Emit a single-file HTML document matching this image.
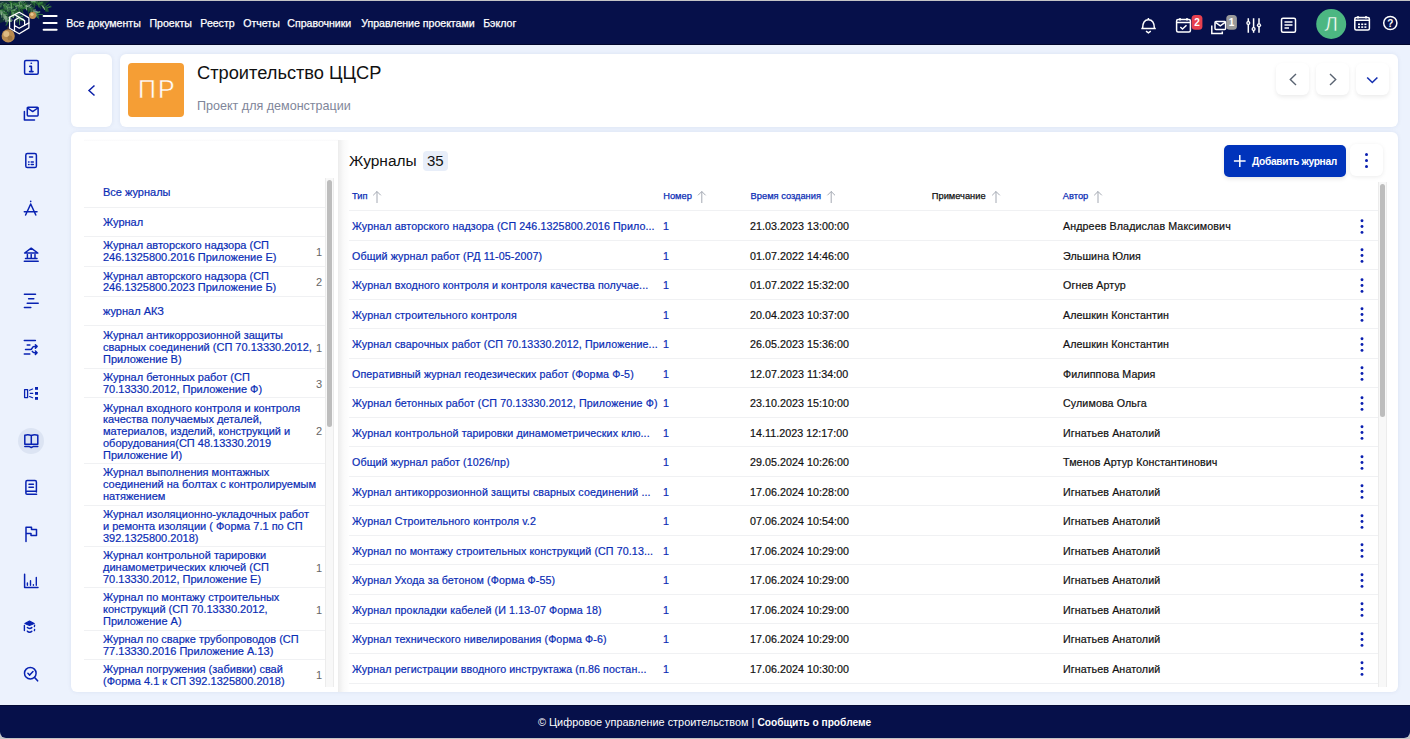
<!DOCTYPE html>
<html><head><meta charset="utf-8">
<style>
*{box-sizing:border-box;margin:0;padding:0}
html,body{width:1410px;height:739px;overflow:hidden;background:#c4c4c6;font-family:"Liberation Sans",sans-serif}
.abs{position:absolute}
.app{position:absolute;left:0;top:1px;width:1410px;height:737px;background:#ecf2fd;border-radius:0 0 6px 6px;overflow:hidden}
.hdr{position:absolute;left:0;top:1px;width:1410px;height:44px;background:#06104a;border-bottom:1px solid #02072e}
.nav{position:absolute;top:17.9px;font-size:10.6px;line-height:10.6px;color:#fff;white-space:nowrap;letter-spacing:-0.02px;-webkit-text-stroke:0.25px #fff}
.ftr{position:absolute;left:0;top:705px;width:1410px;height:33px;background:#06104a;border-radius:0 0 6px 6px;border-top:1px solid #030a35}
.ftxt{position:absolute;top:717px;left:538px;font-size:10.9px;line-height:11px;color:#fff;white-space:nowrap}
.ftxt b{font-size:10.2px}
.side svg{position:absolute}
.card{position:absolute;background:#fff;border-radius:6px;box-shadow:0 0 4px rgba(20,45,110,0.08)}
.t{position:absolute;white-space:nowrap;line-height:1}
.tr{position:absolute;left:349px;width:1029px;height:29.5px;border-top:1px solid #f0f1f3}
.tr span{position:absolute;top:10.1px;font-size:10.7px;line-height:10.7px;white-space:nowrap;-webkit-text-stroke:0.2px currentColor}
.c1{letter-spacing:0.1px}
.c1{left:3px;color:#0a2db5}
.c2{left:314px;color:#0a2db5}
.c3{left:401px;color:#111;letter-spacing:0.05px}
.c5{left:714px;color:#111;letter-spacing:0.1px}
.kb{position:absolute;left:1011px;top:7.7px;width:4px;height:16px}
.kb b{position:absolute;left:0;width:2.9px;height:2.9px;border-radius:50%;background:#0a1fb0}
.kb b:nth-child(1){top:0}.kb b:nth-child(2){top:5.9px}.kb b:nth-child(3){top:11.8px}
.li{position:absolute;left:84px;width:241px;border-bottom:1px solid #f0f1f3}
.lt{position:absolute;left:19px;top:calc(50% + 1.3px);transform:translateY(-50%);font-size:11px;line-height:11.75px;color:#0a2db5;white-space:nowrap;-webkit-text-stroke:0.2px currentColor}
.lc{position:absolute;right:3px;top:calc(50% + 0.8px);transform:translateY(-50%);font-size:11px;line-height:11px;color:#666}
.th{position:absolute;top:192px;font-size:9.3px;line-height:9.3px;color:#0a2db5;white-space:nowrap;-webkit-text-stroke:0.25px currentColor}
.th svg{position:absolute;top:-3px}
</style></head><body>
<div class="app"></div>
<div class="hdr"></div>
<!-- logo -->
<svg class="abs" style="left:0;top:1px" width="62" height="44" viewBox="0 1 62 44" stroke-linecap="round">
  <path d="M0 1 L50 1 L46 4 L36 6 L28 8 L22 11 L17 14 L12 18 L6 21 L0 23 Z" fill="#1c4a2a" opacity="0.55"/>
  <g fill="none"><path d="M2.6 4.6 L5.2 4.0" stroke="#2a6a2f" stroke-width="0.71"/>
<path d="M2.9 4.8 L5.6 3.1" stroke="#1f5a25" stroke-width="0.67"/>
<path d="M0.6 3.3 L3.1 2.5" stroke="#86b58a" stroke-width="0.55"/>
<path d="M1.8 4.1 L5.3 2.9" stroke="#2d7a33" stroke-width="0.52"/>
<path d="M6.9 7.3 L7.8 11.3" stroke="#86b58a" stroke-width="0.62"/>
<path d="M6.5 7.1 L10.7 7.0" stroke="#2d7a33" stroke-width="0.65"/>
<path d="M4.4 5.7 L8.5 4.3" stroke="#5f9f62" stroke-width="0.77"/>
<path d="M3.4 5.1 L4.4 10.3" stroke="#3f8c45" stroke-width="0.62"/>
<path d="M6.4 7.0 L9.8 7.0" stroke="#5f9f62" stroke-width="0.85"/>
<path d="M5.8 6.6 L6.1 9.4" stroke="#86b58a" stroke-width="0.67"/>
<path d="M6.1 6.8 L9.2 4.7" stroke="#a8c8a6" stroke-width="0.53"/>
<path d="M4.5 5.8 L5.4 9.2" stroke="#5f9f62" stroke-width="0.73"/>
<path d="M3.6 5.3 L6.9 3.1" stroke="#a8c8a6" stroke-width="0.53"/>
<path d="M5.8 6.7 L6.2 12.1" stroke="#2a6a2f" stroke-width="0.68"/>
<path d="M5.7 6.6 L7.6 10.0" stroke="#2d7a33" stroke-width="0.74"/>
<path d="M3.9 5.5 L6.5 4.1" stroke="#2d7a33" stroke-width="0.66"/>
<path d="M7.3 7.6 L9.0 11.0" stroke="#86b58a" stroke-width="0.61"/>
<path d="M1.1 3.7 L0.8 7.0" stroke="#5f9f62" stroke-width="0.89"/>
<path d="M5.5 6.4 L5.0 9.3" stroke="#2d7a33" stroke-width="0.56"/>
<path d="M5.3 6.3 L9.4 5.1" stroke="#3f8c45" stroke-width="0.61"/>
<path d="M9.0 8.9 L8.8 12.3" stroke="#2d7a33" stroke-width="0.78"/>
<path d="M11.6 11.1 L16.7 10.5" stroke="#2a6a2f" stroke-width="0.77"/>
<path d="M11.9 11.4 L12.1 14.2" stroke="#a8c8a6" stroke-width="0.66"/>
<path d="M9.3 9.1 L12.1 8.9" stroke="#86b58a" stroke-width="0.52"/>
<path d="M8.0 8.0 L13.3 7.1" stroke="#86b58a" stroke-width="0.51"/>
<path d="M14.1 13.2 L15.0 16.4" stroke="#3f8c45" stroke-width="0.74"/>
<path d="M11.3 10.8 L16.4 8.8" stroke="#5f9f62" stroke-width="0.69"/>
<path d="M10.2 9.9 L13.7 10.4" stroke="#3f8c45" stroke-width="0.69"/>
<path d="M12.8 12.2 L18.2 12.5" stroke="#3f8c45" stroke-width="0.56"/>
<path d="M11.8 11.3 L15.0 10.2" stroke="#a8c8a6" stroke-width="0.85"/>
<path d="M12.9 12.2 L12.9 17.4" stroke="#3f8c45" stroke-width="0.81"/>
<path d="M11.7 11.2 L11.4 15.5" stroke="#2a6a2f" stroke-width="0.89"/>
<path d="M14.0 13.1 L18.4 11.4" stroke="#2d7a33" stroke-width="0.58"/>
<path d="M11.4 11.0 L15.8 8.7" stroke="#5f9f62" stroke-width="0.60"/>
<path d="M12.8 12.2 L13.1 17.5" stroke="#3f8c45" stroke-width="0.88"/>
<path d="M10.6 10.2 L14.4 10.7" stroke="#3f8c45" stroke-width="0.58"/>
<path d="M12.4 11.7 L16.8 11.2" stroke="#2a6a2f" stroke-width="0.76"/>
<path d="M13.8 13.0 L18.3 11.0" stroke="#2a6a2f" stroke-width="0.58"/>
<path d="M14.2 13.3 L13.6 16.8" stroke="#2a6a2f" stroke-width="0.88"/>
<path d="M13.1 12.3 L13.5 17.7" stroke="#a8c8a6" stroke-width="0.56"/>
<path d="M20.0 20.0 L25.0 21.4" stroke="#2a6a2f" stroke-width="0.76"/>
<path d="M18.1 17.7 L17.1 21.1" stroke="#86b58a" stroke-width="0.72"/>
<path d="M15.1 14.1 L20.4 14.2" stroke="#5f9f62" stroke-width="0.89"/>
<path d="M16.0 15.2 L18.9 16.3" stroke="#86b58a" stroke-width="0.60"/>
<path d="M17.9 17.5 L17.0 22.4" stroke="#1f5a25" stroke-width="0.86"/>
<path d="M16.8 16.1 L15.5 20.9" stroke="#86b58a" stroke-width="0.67"/>
<path d="M19.6 19.5 L23.7 19.5" stroke="#1f5a25" stroke-width="0.85"/>
<path d="M18.9 18.7 L21.8 18.2" stroke="#2d7a33" stroke-width="0.69"/>
<path d="M18.6 18.4 L22.6 18.9" stroke="#86b58a" stroke-width="0.69"/>
<path d="M18.9 18.7 L22.1 19.3" stroke="#2a6a2f" stroke-width="0.54"/>
<path d="M17.3 16.7 L22.4 15.9" stroke="#5f9f62" stroke-width="0.63"/>
<path d="M19.9 19.8 L23.7 19.4" stroke="#86b58a" stroke-width="0.82"/>
<path d="M17.5 17.0 L22.6 16.5" stroke="#3f8c45" stroke-width="0.87"/>
<path d="M19.5 19.4 L22.3 18.7" stroke="#1f5a25" stroke-width="0.66"/>
<path d="M16.6 15.9 L19.7 16.1" stroke="#3f8c45" stroke-width="0.81"/>
<path d="M19.5 19.4 L23.7 18.2" stroke="#3f8c45" stroke-width="0.56"/>
<path d="M19.4 19.3 L19.6 24.7" stroke="#5f9f62" stroke-width="0.85"/>
<path d="M0.8 10.8 L4.6 11.5" stroke="#86b58a" stroke-width="0.66"/>
<path d="M2.1 12.1 L2.4 16.8" stroke="#1f5a25" stroke-width="0.64"/>
<path d="M2.3 12.3 L6.3 12.4" stroke="#3f8c45" stroke-width="0.70"/>
<path d="M0.3 10.3 L2.9 9.2" stroke="#3f8c45" stroke-width="0.61"/>
<path d="M4.5 14.5 L7.4 14.8" stroke="#5f9f62" stroke-width="0.84"/>
<path d="M3.4 13.4 L3.4 17.5" stroke="#86b58a" stroke-width="0.73"/>
<path d="M3.5 13.5 L8.4 13.9" stroke="#2d7a33" stroke-width="0.67"/>
<path d="M0.4 10.4 L5.2 9.6" stroke="#1f5a25" stroke-width="0.74"/>
<path d="M1.1 11.1 L-0.1 14.8" stroke="#3f8c45" stroke-width="0.90"/>
<path d="M2.1 12.1 L1.7 14.7" stroke="#a8c8a6" stroke-width="0.60"/>
<path d="M0.5 10.5 L3.6 10.9" stroke="#3f8c45" stroke-width="0.75"/>
<path d="M2.7 12.7 L6.6 13.0" stroke="#2d7a33" stroke-width="0.61"/>
<path d="M4.0 14.0 L4.7 16.5" stroke="#86b58a" stroke-width="0.72"/>
<path d="M0.9 10.9 L1.4 14.8" stroke="#a8c8a6" stroke-width="0.83"/>
<path d="M2.2 12.2 L1.7 17.3" stroke="#86b58a" stroke-width="0.62"/>
<path d="M5.9 16.5 L10.6 18.0" stroke="#a8c8a6" stroke-width="0.79"/>
<path d="M5.6 16.0 L2.5 19.9" stroke="#1f5a25" stroke-width="0.53"/>
<path d="M8.0 20.2 L7.2 22.7" stroke="#a8c8a6" stroke-width="0.84"/>
<path d="M8.5 21.1 L6.7 25.3" stroke="#1f5a25" stroke-width="0.68"/>
<path d="M5.6 16.1 L5.7 19.7" stroke="#3f8c45" stroke-width="0.89"/>
<path d="M7.2 18.8 L11.6 21.4" stroke="#2d7a33" stroke-width="0.64"/>
<path d="M5.0 15.0 L4.9 18.3" stroke="#a8c8a6" stroke-width="0.58"/>
<path d="M7.0 18.5 L11.4 20.9" stroke="#2d7a33" stroke-width="0.66"/>
<path d="M5.2 15.3 L9.3 16.8" stroke="#1f5a25" stroke-width="0.73"/>
<path d="M7.1 18.7 L11.7 19.1" stroke="#86b58a" stroke-width="0.66"/>
<path d="M6.3 17.3 L5.9 21.9" stroke="#a8c8a6" stroke-width="0.56"/>
<path d="M8.3 20.8 L6.0 25.1" stroke="#2d7a33" stroke-width="0.86"/>
<path d="M8.0 20.3 L12.3 20.2" stroke="#a8c8a6" stroke-width="0.77"/>
<path d="M7.8 19.9 L10.1 21.1" stroke="#a8c8a6" stroke-width="0.64"/>
<path d="M5.4 15.7 L3.8 19.8" stroke="#a8c8a6" stroke-width="0.71"/>
<path d="M6.0 16.7 L6.1 21.6" stroke="#a8c8a6" stroke-width="0.87"/>
<path d="M8.6 21.3 L11.3 21.5" stroke="#a8c8a6" stroke-width="0.69"/>
<path d="M24.5 5.2 L26.5 9.5" stroke="#2d7a33" stroke-width="0.80"/>
<path d="M25.8 5.9 L25.8 8.6" stroke="#a8c8a6" stroke-width="0.61"/>
<path d="M18.4 2.2 L21.3 1.9" stroke="#3f8c45" stroke-width="0.76"/>
<path d="M23.5 4.8 L26.2 4.7" stroke="#3f8c45" stroke-width="0.89"/>
<path d="M18.8 2.4 L21.7 0.8" stroke="#86b58a" stroke-width="0.61"/>
<path d="M21.7 3.9 L24.8 1.1" stroke="#3f8c45" stroke-width="0.89"/>
<path d="M25.5 5.7 L28.1 5.1" stroke="#86b58a" stroke-width="0.89"/>
<path d="M21.6 3.8 L23.3 8.8" stroke="#2d7a33" stroke-width="0.53"/>
<path d="M18.7 2.4 L18.5 5.3" stroke="#2a6a2f" stroke-width="0.75"/>
<path d="M20.2 3.1 L23.0 1.5" stroke="#5f9f62" stroke-width="0.66"/>
<path d="M19.3 2.6 L19.8 6.3" stroke="#a8c8a6" stroke-width="0.56"/>
<path d="M20.8 3.4 L22.5 6.4" stroke="#3f8c45" stroke-width="0.80"/>
<path d="M24.7 5.4 L27.1 3.4" stroke="#1f5a25" stroke-width="0.86"/>
<path d="M20.3 3.2 L22.3 6.3" stroke="#2a6a2f" stroke-width="0.74"/>
<path d="M20.9 3.4 L21.3 8.5" stroke="#3f8c45" stroke-width="0.54"/>
<path d="M24.7 5.3 L25.2 8.2" stroke="#3f8c45" stroke-width="0.67"/>
<path d="M20.5 3.3 L20.7 7.0" stroke="#1f5a25" stroke-width="0.82"/>
<path d="M23.0 4.5 L25.3 3.2" stroke="#a8c8a6" stroke-width="0.66"/>
<path d="M22.9 4.5 L25.9 2.9" stroke="#1f5a25" stroke-width="0.86"/>
<path d="M29.9 8.8 L33.3 8.0" stroke="#3f8c45" stroke-width="0.60"/>
<path d="M31.2 9.7 L31.7 12.9" stroke="#5f9f62" stroke-width="0.72"/>
<path d="M28.8 8.0 L31.3 7.1" stroke="#86b58a" stroke-width="0.86"/>
<path d="M29.5 8.5 L32.9 7.8" stroke="#2a6a2f" stroke-width="0.68"/>
<path d="M27.0 6.7 L30.0 6.5" stroke="#86b58a" stroke-width="0.54"/>
<path d="M27.7 7.2 L27.3 10.3" stroke="#1f5a25" stroke-width="0.80"/>
<path d="M28.9 8.1 L28.7 11.2" stroke="#3f8c45" stroke-width="0.64"/>
<path d="M26.4 6.3 L26.6 9.9" stroke="#a8c8a6" stroke-width="0.70"/>
<path d="M30.4 9.1 L35.6 9.4" stroke="#5f9f62" stroke-width="0.66"/>
<path d="M29.1 8.2 L28.4 13.3" stroke="#1f5a25" stroke-width="0.55"/>
<path d="M29.0 8.1 L28.1 12.0" stroke="#1f5a25" stroke-width="0.66"/>
<path d="M32.5 10.6 L31.7 13.8" stroke="#1f5a25" stroke-width="0.59"/>
<path d="M27.1 6.8 L31.1 4.4" stroke="#a8c8a6" stroke-width="0.84"/>
<path d="M32.3 10.5 L34.8 9.8" stroke="#2a6a2f" stroke-width="0.55"/>
<path d="M30.0 8.8 L33.2 7.7" stroke="#2d7a33" stroke-width="0.75"/>
<path d="M29.7 8.6 L29.6 11.5" stroke="#1f5a25" stroke-width="0.62"/>
<path d="M32.6 10.7 L35.7 10.2" stroke="#86b58a" stroke-width="0.50"/>
<path d="M29.8 8.7 L30.6 12.0" stroke="#2a6a2f" stroke-width="0.85"/>
<path d="M35.4 12.9 L37.9 12.4" stroke="#5f9f62" stroke-width="0.78"/>
<path d="M34.5 12.2 L39.7 12.4" stroke="#a8c8a6" stroke-width="0.67"/>
<path d="M34.3 12.0 L33.5 15.1" stroke="#1f5a25" stroke-width="0.78"/>
<path d="M36.6 13.9 L36.3 17.0" stroke="#2a6a2f" stroke-width="0.62"/>
<path d="M37.2 14.4 L42.6 14.5" stroke="#3f8c45" stroke-width="0.81"/>
<path d="M34.0 11.8 L35.1 16.4" stroke="#3f8c45" stroke-width="0.54"/>
<path d="M36.1 13.5 L39.7 11.8" stroke="#a8c8a6" stroke-width="0.52"/>
<path d="M36.0 13.4 L36.9 15.8" stroke="#86b58a" stroke-width="0.56"/>
<path d="M33.3 11.2 L37.1 11.4" stroke="#a8c8a6" stroke-width="0.85"/>
<path d="M36.7 13.9 L39.8 12.3" stroke="#2d7a33" stroke-width="0.76"/>
<path d="M35.6 13.1 L37.3 17.3" stroke="#5f9f62" stroke-width="0.84"/>
<path d="M37.9 14.9 L38.6 17.4" stroke="#3f8c45" stroke-width="0.53"/>
<path d="M35.1 12.7 L39.8 11.6" stroke="#5f9f62" stroke-width="0.64"/>
<path d="M37.1 14.3 L38.6 18.6" stroke="#2d7a33" stroke-width="0.65"/>
<path d="M37.4 3.8 L41.8 2.1" stroke="#5f9f62" stroke-width="0.51"/>
<path d="M33.3 2.2 L34.9 4.3" stroke="#1f5a25" stroke-width="0.82"/>
<path d="M30.5 1.2 L34.6 -2.0" stroke="#3f8c45" stroke-width="0.65"/>
<path d="M32.7 2.0 L37.1 0.5" stroke="#3f8c45" stroke-width="0.87"/>
<path d="M32.4 1.9 L35.5 1.4" stroke="#5f9f62" stroke-width="0.79"/>
<path d="M33.7 2.4 L34.6 7.6" stroke="#2a6a2f" stroke-width="0.70"/>
<path d="M37.4 3.8 L42.7 3.0" stroke="#3f8c45" stroke-width="0.83"/>
<path d="M36.2 3.3 L39.4 2.1" stroke="#3f8c45" stroke-width="0.81"/>
<path d="M34.8 2.8 L37.5 1.6" stroke="#5f9f62" stroke-width="0.53"/>
<path d="M30.3 1.1 L32.4 4.2" stroke="#1f5a25" stroke-width="0.90"/>
<path d="M32.1 1.8 L35.7 0.7" stroke="#a8c8a6" stroke-width="0.89"/>
<path d="M31.4 1.5 L35.3 -0.3" stroke="#a8c8a6" stroke-width="0.59"/>
<path d="M34.3 2.6 L36.9 0.5" stroke="#3f8c45" stroke-width="0.73"/>
<path d="M33.0 2.1 L34.7 4.8" stroke="#2d7a33" stroke-width="0.59"/>
<path d="M32.3 1.8 L35.7 0.5" stroke="#2d7a33" stroke-width="0.70"/>
<path d="M31.9 1.7 L36.4 -1.4" stroke="#1f5a25" stroke-width="0.50"/>
<path d="M37.1 3.6 L41.0 0.2" stroke="#1f5a25" stroke-width="0.85"/>
<path d="M31.9 1.7 L37.1 0.2" stroke="#86b58a" stroke-width="0.58"/>
<path d="M38.5 4.2 L41.5 2.9" stroke="#2a6a2f" stroke-width="0.77"/>
<path d="M38.0 4.0 L39.8 7.2" stroke="#2d7a33" stroke-width="0.52"/>
<path d="M45.0 7.0 L48.9 4.8" stroke="#2d7a33" stroke-width="0.83"/>
<path d="M43.7 6.5 L44.3 9.5" stroke="#3f8c45" stroke-width="0.53"/>
<path d="M38.2 4.1 L39.0 6.7" stroke="#1f5a25" stroke-width="0.82"/>
<path d="M42.6 6.0 L45.0 4.6" stroke="#2d7a33" stroke-width="0.66"/>
<path d="M39.9 4.8 L40.6 8.5" stroke="#1f5a25" stroke-width="0.62"/>
<path d="M42.0 5.7 L42.9 8.1" stroke="#2a6a2f" stroke-width="0.90"/>
<path d="M40.5 5.1 L44.0 3.8" stroke="#1f5a25" stroke-width="0.67"/>
<path d="M39.1 4.5 L42.0 2.2" stroke="#3f8c45" stroke-width="0.68"/>
<path d="M39.1 4.5 L42.0 4.1" stroke="#2a6a2f" stroke-width="0.86"/>
<path d="M38.6 4.3 L39.1 7.2" stroke="#3f8c45" stroke-width="0.61"/>
<path d="M41.6 5.6 L45.6 4.9" stroke="#2a6a2f" stroke-width="0.82"/>
<path d="M43.6 6.4 L46.5 10.9" stroke="#5f9f62" stroke-width="0.63"/>
<path d="M42.3 5.8 L44.9 9.6" stroke="#a8c8a6" stroke-width="0.83"/>
<path d="M39.1 4.5 L42.9 2.3" stroke="#2d7a33" stroke-width="0.83"/>
<path d="M45.7 7.4 L51.0 7.0" stroke="#2d7a33" stroke-width="0.65"/>
<path d="M45.5 7.2 L49.2 4.0" stroke="#2d7a33" stroke-width="0.52"/>
<path d="M47.2 8.1 L50.3 6.4" stroke="#5f9f62" stroke-width="0.74"/>
<path d="M47.2 8.1 L47.7 11.5" stroke="#2d7a33" stroke-width="0.67"/>
<path d="M47.6 8.3 L48.4 11.3" stroke="#1f5a25" stroke-width="0.75"/>
<path d="M47.0 8.0 L51.1 6.5" stroke="#2a6a2f" stroke-width="0.68"/>
<path d="M45.7 7.4 L46.6 9.9" stroke="#3f8c45" stroke-width="0.67"/>
<path d="M45.4 7.2 L46.5 11.5" stroke="#1f5a25" stroke-width="0.75"/>
<path d="M45.3 7.2 L45.6 11.2" stroke="#1f5a25" stroke-width="0.80"/>
<path d="M13.4 4.6 L16.1 4.8" stroke="#86b58a" stroke-width="0.79"/>
<path d="M12.9 4.3 L18.0 4.2" stroke="#3f8c45" stroke-width="0.88"/>
<path d="M13.5 4.7 L17.8 2.9" stroke="#2d7a33" stroke-width="0.53"/>
<path d="M10.1 2.4 L12.0 7.2" stroke="#3f8c45" stroke-width="0.86"/>
<path d="M10.7 2.8 L11.4 8.0" stroke="#2d7a33" stroke-width="0.74"/>
<path d="M11.7 3.5 L14.3 3.1" stroke="#2d7a33" stroke-width="0.66"/>
<path d="M11.8 3.5 L11.9 8.7" stroke="#2d7a33" stroke-width="0.82"/>
<path d="M9.6 2.1 L12.9 0.8" stroke="#2a6a2f" stroke-width="0.68"/>
<path d="M11.1 3.1 L15.2 2.7" stroke="#2a6a2f" stroke-width="0.66"/>
<path d="M12.8 4.2 L13.6 7.7" stroke="#2d7a33" stroke-width="0.64"/>
<path d="M12.6 4.1 L14.0 8.2" stroke="#1f5a25" stroke-width="0.62"/>
<path d="M11.1 3.1 L11.3 8.5" stroke="#86b58a" stroke-width="0.87"/>
<path d="M13.4 4.6 L16.2 3.2" stroke="#3f8c45" stroke-width="0.75"/>
<path d="M10.6 2.7 L10.2 5.6" stroke="#2d7a33" stroke-width="0.75"/>
<path d="M8.3 1.2 L11.8 1.5" stroke="#1f5a25" stroke-width="0.71"/>
<path d="M18.3 7.1 L19.1 11.3" stroke="#2d7a33" stroke-width="0.65"/>
<path d="M20.6 8.3 L25.9 7.6" stroke="#2d7a33" stroke-width="0.78"/>
<path d="M17.6 6.8 L22.1 4.4" stroke="#2a6a2f" stroke-width="0.61"/>
<path d="M20.5 8.2 L25.4 7.9" stroke="#3f8c45" stroke-width="0.74"/>
<path d="M18.6 7.3 L20.8 12.0" stroke="#1f5a25" stroke-width="0.52"/>
<path d="M14.2 5.1 L16.8 4.6" stroke="#2a6a2f" stroke-width="0.54"/>
<path d="M18.9 7.5 L22.0 7.0" stroke="#86b58a" stroke-width="0.76"/>
<path d="M19.2 7.6 L19.3 10.6" stroke="#3f8c45" stroke-width="0.53"/>
<path d="M19.0 7.5 L19.3 10.0" stroke="#2a6a2f" stroke-width="0.67"/>
<path d="M21.3 8.6 L24.6 6.6" stroke="#2d7a33" stroke-width="0.90"/>
<path d="M16.1 6.0 L21.2 5.4" stroke="#a8c8a6" stroke-width="0.88"/>
<path d="M16.1 6.1 L20.2 5.1" stroke="#5f9f62" stroke-width="0.77"/>
<path d="M21.3 8.7 L23.4 13.5" stroke="#2d7a33" stroke-width="0.53"/>
<path d="M18.1 7.0 L21.2 6.3" stroke="#a8c8a6" stroke-width="0.58"/>
<path d="M15.3 5.6 L16.9 8.9" stroke="#86b58a" stroke-width="0.60"/>
<path d="M21.3 8.6 L22.4 12.6" stroke="#1f5a25" stroke-width="0.84"/>
<path d="M17.5 6.7 L20.6 5.3" stroke="#2d7a33" stroke-width="0.66"/>
<path d="M18.7 7.3 L21.2 7.0" stroke="#1f5a25" stroke-width="0.75"/>
<path d="M15.3 5.6 L17.5 4.3" stroke="#2d7a33" stroke-width="0.78"/></g>
  <g fill="none" stroke="#fff" stroke-width="1.25" stroke-linejoin="round">
    <path d="M19.26 12.2 L28.9 17.9 L28.9 27.9 L19.26 33.8 L9.6 28.3 L9.6 17.1 Z"/>
    <path d="M19.2 17.5 L24.6 20.6 L24.6 25.3 M19.2 28.3 L28.9 22.9 M19.2 28.3 L14.5 25.5 L14.5 20.3 L19.2 17.5 M24.6 20.6 L14.9 14.7 M14.5 25.5 L14.5 31"/>
  </g>
  <circle cx="32.6" cy="15.3" r="3.6" fill="#c08f52"/>
  <circle cx="32" cy="14.3" r="1.6" fill="#f0d3a0" opacity="0.8"/>
  <path d="M32.6 11.7 L32.6 9" stroke="#3a5a30" stroke-width="0.8"/>
  <circle cx="8.2" cy="35.9" r="6.6" fill="#b98a50"/>
  <circle cx="6.3" cy="34" r="3" fill="#efcf98" opacity="0.7"/>
  <circle cx="10" cy="38" r="2.5" fill="#7a5a30" opacity="0.4"/>
  <path d="M8.2 29.3 L8.2 27" stroke="#6a5030" stroke-width="1"/>
  <g fill="#fff"><rect x="42.6" y="15.1" width="15" height="2" rx="1"/><rect x="42.6" y="22" width="15" height="2" rx="1"/><rect x="42.6" y="28.7" width="15" height="2" rx="1"/></g>
</svg>
<div class="nav" style="left:66.3px">Все документы</div>
<div class="nav" style="left:149.5px">Проекты</div>
<div class="nav" style="left:200.3px">Реестр</div>
<div class="nav" style="left:243.3px">Отчеты</div>
<div class="nav" style="left:287.3px">Справочники</div>
<div class="nav" style="left:361.2px">Управление проектами</div>
<div class="nav" style="left:483.2px">Бэклог</div>

<!-- header right icons -->
<svg class="abs" style="left:1130px;top:5px" width="280" height="40" viewBox="1130 5 280 40" fill="none" stroke="#fff" stroke-width="1.5">
  <!-- bell -->
  <path d="M1141.3 28.6 L1155.8 28.6 M1142.6 28.6 C1142.6 22.6 1144.8 19.8 1148.4 19.8 C1152 19.8 1154.4 22.6 1154.4 28.6"/>
  <path d="M1148.4 18 L1148.4 19.6"/>
  <path d="M1146 31.2 L1148.4 32.8 L1150.8 31.2"/>
  <!-- calendar check -->
  <rect x="1176.6" y="19.5" width="13.8" height="12.6" rx="1.5"/>
  <path d="M1176.6 22.4 L1190.4 22.4 M1180 18 L1180 20.5 M1187 18 L1187 20.5 M1180.3 27 L1182.5 29 L1186.5 25.2"/>
  <!-- mail stack -->
  <rect x="1215" y="21.4" width="10.6" height="8.2" rx="1"/>
  <path d="M1215.5 22.4 L1220.3 25.8 L1225.1 22.4"/>
  <path d="M1211.8 25.5 L1211.8 33.6 L1222.3 33.6 L1222.3 31.5"/>
  <!-- sliders -->
  <path d="M1248.3 18.3 L1248.3 32.7 M1253.6 18.3 L1253.6 32.7 M1259 18.3 L1259 32.7"/>
  <!-- doc -->
  <rect x="1281.5" y="18.3" width="14" height="14" rx="1.5"/>
  <path d="M1284.5 22 L1292.5 22 M1284.5 25 L1292.5 25 M1284.5 28 L1289 28"/>
  <!-- calendar -->
  <rect x="1354.8" y="17.5" width="14.6" height="12.6" rx="1.5"/>
  <path d="M1354.8 20.2 L1369.4 20.2 M1358 16 L1358 18.5 M1366 16 L1366 18.5"/>
  <!-- help -->
  <circle cx="1390.3" cy="23" r="6.6"/>
</svg>
<svg class="abs" style="left:1130px;top:5px" width="280" height="40" viewBox="1130 5 280 40">
  <g fill="#fff">
    <circle cx="1248.3" cy="23" r="2.1"/><circle cx="1253.6" cy="29" r="2.1"/><circle cx="1259" cy="25.3" r="2.1"/>
  </g>
  <g fill="#06104a"><circle cx="1248.3" cy="23" r="0.8"/><circle cx="1253.6" cy="29" r="0.8"/><circle cx="1259" cy="25.3" r="0.8"/></g>
  <g fill="#fff"><rect x="1358" y="23.5" width="2" height="1.6"/><rect x="1361.2" y="23.5" width="2" height="1.6"/><rect x="1364.4" y="23.5" width="2" height="1.6"/><rect x="1358" y="26.3" width="2" height="1.6"/><rect x="1361.2" y="26.3" width="2" height="1.6"/><rect x="1364.4" y="26.3" width="2" height="1.6"/></g>
  <rect x="1191.6" y="15.1" width="10.8" height="14.6" rx="3.5" fill="#e8404f"/>
  <rect x="1226.3" y="15.1" width="10.6" height="14.6" rx="3.5" fill="#9b9b9b"/>
  <text x="1197" y="26" font-size="10" font-family="Liberation Sans" font-weight="bold" fill="#fff" text-anchor="middle">2</text>
  <text x="1231.6" y="26" font-size="10" font-family="Liberation Sans" font-weight="bold" fill="#fff" text-anchor="middle">1</text>
  <circle cx="1331.2" cy="24" r="15" fill="#4cb782"/>
  <text x="1331.2" y="31.2" font-size="20.5" font-family="Liberation Sans" fill="#fff" stroke="#4cb782" stroke-width="0.5" text-anchor="middle">Л</text>
  <text x="1390.3" y="27" font-size="10" font-family="Liberation Sans" font-weight="bold" fill="#fff" text-anchor="middle">?</text>
</svg>

<!-- sidebar -->
<div class="side">
<svg class="abs" style="left:0;top:45px" width="62" height="660" viewBox="0 45 62 660" fill="none" stroke="#0822b2" stroke-width="1.5" stroke-linecap="round" stroke-linejoin="round">
  <!-- info -->
  <rect x="24.6" y="60.6" width="13.6" height="13.6" rx="1.2"/>
  <path d="M31.2 63.3 L31.4 63.3" stroke-width="1.6"/>
  <path d="M29.8 66.4 L31.4 66.4 L31.4 71.4 M29.6 71.6 L33 71.6" stroke-width="1.6"/>
  <!-- mail stack -->
  <rect x="27.3" y="107.3" width="10.8" height="8.6" rx="0.8"/>
  <path d="M27.6 108 L32.7 111.6 L37.8 108"/>
  <path d="M24.4 111.5 L24.4 120 L34.5 120"/>
  <!-- calculator -->
  <rect x="25.8" y="153.6" width="10.6" height="14" rx="1.6"/>
  <path d="M29.5 157 L32.6 157 M28.6 162 L29 162 M31.2 162 L33.3 162 M28.6 164.6 L29 164.6 M31.2 164.6 L33.3 164.6"/>
  <!-- compass -->
  <path d="M30.7 201.3 L30.7 201.6" stroke-width="1.6"/>
  <path d="M30.7 204 L25.6 215 M30.7 204 L35.8 215 M24.3 211.8 L37 211.8"/>
  <!-- bank -->
  <path d="M24.6 253 L31.2 248.2 L37.8 253 Z"/>
  <path d="M27.4 254.5 L27.4 258 M31.2 254.5 L31.2 258 M35 254.5 L35 258 M25.5 258.6 L37 258.6 M24.3 261.3 L38.2 261.3"/>
  <!-- lines -->
  <path d="M24.4 294.3 L35.5 294.3 M28.6 298.8 L33.8 298.8 M27.2 303.3 L38.2 303.3 M24.4 307.5 L30.8 307.5" stroke-width="1.5"/>
  <!-- shuffle lines -->
  <path d="M24.3 340.5 L35.4 340.5 M27.2 345.1 L29.9 345.1 M25.5 349.5 L30.6 349.5 C32.3 349.5 32 346.4 34 346.4 L37 346.4 M35.4 344.7 L37.1 346.4 L35.4 348.1 M32.3 351.3 C32.9 352.2 33.4 352.7 34.4 352.7 L37 352.7 M35.4 351 L37.1 352.7 L35.4 354.4 M24.3 353.9 L29.8 353.9" stroke-width="1.5"/>
  <!-- distribution -->
  <rect x="24.6" y="389.6" width="3" height="8" stroke-width="1.3"/>
  <path d="M29.6 390.3 L32.6 389 M30.2 393.3 L32.8 393.3 M29.6 396.5 L32.6 397.7" stroke-width="1.2"/>
  <g fill="#0822b2" stroke="none"><rect x="35" y="387" width="3" height="2.8"/><rect x="35" y="392" width="3" height="2.8"/><rect x="35" y="397" width="3" height="2.8"/></g>
  <!-- active circle + book -->
  <circle cx="31" cy="441" r="13" fill="#dce4f3" stroke="none"/>
  <path d="M24.8 435.2 C27 434.6 29.8 434.8 31.3 435.6 C32.8 434.8 35.6 434.6 37.8 435.2 L37.8 444.3 L24.8 444.3 Z M31.3 435.6 L31.3 444.3"/>
  <path d="M24.8 446.6 L29.5 446.6 L31.3 447.5 L33.1 446.6 L37.8 446.6"/>
  <!-- book 2 -->
  <path d="M36.4 492 L36.4 482 C36.4 481 35.6 480.6 35 480.6 L27.2 480.6 C26.4 480.6 25.9 481.3 25.9 482 L25.9 493.2 C25.9 493.8 26.3 494.2 27 494.2 L36.6 494.2 M25.9 492.2 C26 491.6 26.5 491.3 27.2 491.3 L36.4 491.3"/>
  <path d="M29 484.3 L33.4 484.3 M29 487.3 L33.4 487.3" stroke-width="1.5"/>
  <!-- flag -->
  <path d="M26 541.5 L26 527.3 L31.5 527.3 L31.5 529.6 L36.5 529.6 L36.5 535.6 L31 535.6 L31 533.5 L26 533.5"/>
  <!-- chart -->
  <path d="M24.6 574.3 L24.6 587.4 L38 587.4"/>
  <path d="M27.4 583 L27.4 585.2 M30.5 580.8 L30.5 585.2 M33.4 584.6 L33.4 585.2 M36.3 577.4 L36.3 585.2" stroke-width="1.4"/>
  <!-- grad cap -->
  <path d="M29.5 621 L34.2 623.4 L29.5 625.4 L24.9 623.4 Z" fill="#0822b2" stroke-width="1.1"/>
  <path d="M24.4 625.4 L24.4 630.6 M34.6 625.3 L34.4 626.5 M34.6 629.4 L34.4 630.6" stroke-width="1.4"/>
  <path d="M27.4 627.6 C28.5 628.8 30.6 628.8 31.8 627.6 M27.4 631.2 C28.5 632.6 30.6 632.6 31.8 631.2" stroke-width="1.5"/>
  <!-- search check -->
  <circle cx="30.3" cy="673.2" r="5.8"/>
  <path d="M34.6 677.5 L37.6 680.8" stroke-width="1.6"/>
  <path d="M27.9 673.3 L29.7 675.1 L33 671.5"/>
</svg>

</div>

<!-- back card -->
<div class="card" style="left:71px;top:54px;width:41px;height:73px"></div>
<svg class="abs" style="left:71px;top:54px" width="41" height="73" viewBox="71 54 41 73"><path d="M94.5 85.5 L89 90.5 L94.5 95.5" fill="none" stroke="#0a1fa8" stroke-width="1.5"/></svg>

<!-- project card -->
<div class="card" style="left:120px;top:54px;width:1278px;height:73px"></div>
<div class="abs" style="left:128.3px;top:62.9px;width:55.7px;height:54.6px;background:#f59e35;border-radius:4px"></div>
<div class="t" style="left:138px;top:77.3px;font-size:25px;color:#fff;letter-spacing:2px;-webkit-text-stroke:0.45px #f59e35">ПР</div>
<div class="t" style="left:197px;top:64.4px;font-size:18.25px;color:#111">Строительство ЦЦСР</div>
<div class="t" style="left:197px;top:99.9px;font-size:12.55px;color:#80869a">Проект для демонстрации</div>
<div class="card" style="left:1276.3px;top:62.9px;width:33px;height:32.2px;box-shadow:0 2px 4px rgba(0,0,0,0.08)"></div>
<div class="card" style="left:1316.4px;top:62.9px;width:32.4px;height:32.2px;box-shadow:0 2px 4px rgba(0,0,0,0.08)"></div>
<div class="card" style="left:1356.2px;top:62.9px;width:32.4px;height:32.2px;box-shadow:0 2px 4px rgba(0,0,0,0.08)"></div>
<svg class="abs" style="left:1270px;top:60px" width="130" height="40" viewBox="1270 60 130 40" fill="none" stroke-width="1.4">
  <path d="M1296 74 L1290.3 79.5 L1296 85" stroke="#5a6472"/>
  <path d="M1330 74 L1335.7 79.5 L1330 85" stroke="#5a6472"/>
  <path d="M1367.2 77.5 L1372.3 82.5 L1377.4 77.5" stroke="#1530b0" stroke-width="1.6"/>
</svg>

<!-- main card -->
<div class="card" style="left:71px;top:132px;width:1327px;height:560px"></div>
<!-- left panel -->
<div class="abs" style="left:84px;top:140px;width:254.5px;height:552px;background:#fff"></div>
<div class="abs" style="left:0;top:0;width:340px;height:689px;overflow:hidden"><div class="li" style="top:177.60px;height:30.20px"><div class="lt">Все журналы</div></div>
<div class="li" style="top:207.30px;height:29.80px"><div class="lt">Журнал</div></div>
<div class="li" style="top:236.60px;height:30.20px"><div class="lt">Журнал авторского надзора (СП<br>246.1325800.2016 Приложение Е)</div><span class="lc">1</span></div>
<div class="li" style="top:266.30px;height:30.90px"><div class="lt">Журнал авторского надзора (СП<br>246.1325800.2023 Приложение Б)</div><span class="lc">2</span></div>
<div class="li" style="top:296.70px;height:29.80px"><div class="lt">журнал АКЗ</div></div>
<div class="li" style="top:326.00px;height:42.70px"><div class="lt">Журнал антикоррозионной защиты<br>сварных соединений (СП 70.13330.2012,<br>Приложение В)</div><span class="lc">1</span></div>
<div class="li" style="top:368.20px;height:30.30px"><div class="lt">Журнал бетонных работ (СП<br>70.13330.2012, Приложение Ф)</div><span class="lc">3</span></div>
<div class="li" style="top:398.00px;height:65.50px"><div class="lt">Журнал входного контроля и контроля<br>качества получаемых деталей,<br>материалов, изделий, конструкций и<br>оборудования(СП 48.13330.2019<br>Приложение И)</div><span class="lc">2</span></div>
<div class="li" style="top:463.00px;height:42.70px"><div class="lt">Журнал выполнения монтажных<br>соединений на болтах с контролируемым<br>натяжением</div></div>
<div class="li" style="top:505.20px;height:42.10px"><div class="lt">Журнал изоляционно-укладочных работ<br>и ремонта изоляции ( Форма 7.1 по СП<br>392.1325800.2018)</div></div>
<div class="li" style="top:546.80px;height:41.70px"><div class="lt">Журнал контрольной тарировки<br>динамометрических ключей (СП<br>70.13330.2012, Приложение Е)</div><span class="lc">1</span></div>
<div class="li" style="top:588.00px;height:42.50px"><div class="lt">Журнал по монтажу строительных<br>конструкций (СП 70.13330.2012,<br>Приложение А)</div><span class="lc">1</span></div>
<div class="li" style="top:630.00px;height:30.30px"><div class="lt">Журнал по сварке трубопроводов (СП<br>77.13330.2016 Приложение А.13)</div></div>
<div class="li" style="top:659.80px;height:30.70px"><div class="lt">Журнал погружения (забивки) свай<br>(Форма 4.1 к СП 392.1325800.2018)</div><span class="lc">1</span></div></div>
<div class="abs" style="left:325.4px;top:177.6px;width:8.6px;height:509.5px;background:#f8f8f8;border-left:1px solid #ececec;border-right:1px solid #ececec"></div>
<div class="abs" style="left:327px;top:180px;width:5.2px;height:247px;background:#bdbdbd;border-radius:3px"></div>
<div class="abs" style="left:84px;top:138.5px;width:254px;height:2px;background:linear-gradient(#fff,#f9f9fa)"></div>
<!-- right panel shadow -->
<div class="abs" style="left:338px;top:140px;width:12px;height:552px;background:linear-gradient(to right,rgba(0,0,0,0.075),rgba(0,0,0,0.02) 50%,rgba(0,0,0,0))"></div>

<div class="t" style="left:349px;top:152.6px;font-size:15.5px;color:#111">Журналы</div>
<div class="abs" style="left:422.5px;top:150.8px;width:25.8px;height:20px;background:#e8eef9;border-radius:4px"></div>
<div class="t" style="left:427px;top:153.4px;font-size:15px;color:#111">35</div>

<div class="abs" style="left:1223.9px;top:144.9px;width:122px;height:32.1px;background:#0033bb;border-radius:5px;box-shadow:0 2px 4px rgba(0,0,0,0.1)"></div>
<svg class="abs" style="left:1230px;top:150px" width="20" height="20" viewBox="1230 150 20 20"><path d="M1239.8 155 L1239.8 167 M1233.9 161 L1245.6 161" stroke="#fff" stroke-width="1.5"/></svg>
<div class="t" style="left:1252px;top:156.6px;font-size:10.2px;color:#fff;font-weight:bold;letter-spacing:-0.3px">Добавить журнал</div>
<div class="card" style="left:1350px;top:143.8px;width:32.5px;height:32.3px;box-shadow:0 1px 4px rgba(0,0,0,0.08)"></div>
<div class="abs" style="left:1365px;top:152.9px;width:3px;height:3px;border-radius:50%;background:#0a1fb0"></div>
<div class="abs" style="left:1365px;top:158.6px;width:3px;height:3px;border-radius:50%;background:#0a1fb0"></div>
<div class="abs" style="left:1365px;top:164.8px;width:3px;height:3px;border-radius:50%;background:#0a1fb0"></div>

<!-- table header -->
<div class="th" style="left:352px">Тип</div>
<div class="th" style="left:663.2px">Номер</div>
<div class="th" style="left:750.6px">Время создания</div>
<div class="th" style="left:931.8px;color:#111">Примечание</div>
<div class="th" style="left:1062.8px">Автор</div>
<svg class="abs" style="left:340px;top:185px" width="1060" height="25" viewBox="340 185 1060 25" fill="none" stroke="#9a9faa" stroke-width="0.9">
  <path d="M377 203 L377 191.5 M373.2 195.3 L377 191.5 L380.8 195.3"/>
  <path d="M701.8 203 L701.8 191.5 M698 195.3 L701.8 191.5 L705.6 195.3"/>
  <path d="M831.2 203 L831.2 191.5 M827.4 195.3 L831.2 191.5 L835 195.3"/>
  <path d="M996 203 L996 191.5 M992.2 195.3 L996 191.5 L999.8 195.3"/>
  <path d="M1098 203 L1098 191.5 M1094.2 195.3 L1098 191.5 L1101.8 195.3"/>
</svg>
<div class="tr" style="top:210.30px"><span class="c1">Журнал авторского надзора (СП 246.1325800.2016 Прило...</span><span class="c2">1</span><span class="c3">21.03.2023 13:00:00</span><span class="c5">Андреев Владислав Максимович</span><svg class="kb" width="4" height="16" viewBox="0 0 4 16"><g fill="#0a1fb0"><circle cx="2" cy="1.7" r="1.45"/><circle cx="2" cy="7.5" r="1.45"/><circle cx="2" cy="13.4" r="1.45"/></g></svg></div>
<div class="tr" style="top:239.80px"><span class="c1">Общий журнал работ (РД 11-05-2007)</span><span class="c2">1</span><span class="c3">01.07.2022 14:46:00</span><span class="c5">Эльшина Юлия</span><svg class="kb" width="4" height="16" viewBox="0 0 4 16"><g fill="#0a1fb0"><circle cx="2" cy="1.7" r="1.45"/><circle cx="2" cy="7.5" r="1.45"/><circle cx="2" cy="13.4" r="1.45"/></g></svg></div>
<div class="tr" style="top:269.30px"><span class="c1">Журнал входного контроля и контроля качества получае...</span><span class="c2">1</span><span class="c3">01.07.2022 15:32:00</span><span class="c5">Огнев Артур</span><svg class="kb" width="4" height="16" viewBox="0 0 4 16"><g fill="#0a1fb0"><circle cx="2" cy="1.7" r="1.45"/><circle cx="2" cy="7.5" r="1.45"/><circle cx="2" cy="13.4" r="1.45"/></g></svg></div>
<div class="tr" style="top:298.80px"><span class="c1">Журнал строительного контроля</span><span class="c2">1</span><span class="c3">20.04.2023 10:37:00</span><span class="c5">Алешкин Константин</span><svg class="kb" width="4" height="16" viewBox="0 0 4 16"><g fill="#0a1fb0"><circle cx="2" cy="1.7" r="1.45"/><circle cx="2" cy="7.5" r="1.45"/><circle cx="2" cy="13.4" r="1.45"/></g></svg></div>
<div class="tr" style="top:328.30px"><span class="c1">Журнал сварочных работ (СП 70.13330.2012, Приложение...</span><span class="c2">1</span><span class="c3">26.05.2023 15:36:00</span><span class="c5">Алешкин Константин</span><svg class="kb" width="4" height="16" viewBox="0 0 4 16"><g fill="#0a1fb0"><circle cx="2" cy="1.7" r="1.45"/><circle cx="2" cy="7.5" r="1.45"/><circle cx="2" cy="13.4" r="1.45"/></g></svg></div>
<div class="tr" style="top:357.80px"><span class="c1">Оперативный журнал геодезических работ (Форма Ф-5)</span><span class="c2">1</span><span class="c3">12.07.2023 11:34:00</span><span class="c5">Филиппова Мария</span><svg class="kb" width="4" height="16" viewBox="0 0 4 16"><g fill="#0a1fb0"><circle cx="2" cy="1.7" r="1.45"/><circle cx="2" cy="7.5" r="1.45"/><circle cx="2" cy="13.4" r="1.45"/></g></svg></div>
<div class="tr" style="top:387.30px"><span class="c1">Журнал бетонных работ (СП 70.13330.2012, Приложение Ф)</span><span class="c2">1</span><span class="c3">23.10.2023 15:10:00</span><span class="c5">Сулимова Ольга</span><svg class="kb" width="4" height="16" viewBox="0 0 4 16"><g fill="#0a1fb0"><circle cx="2" cy="1.7" r="1.45"/><circle cx="2" cy="7.5" r="1.45"/><circle cx="2" cy="13.4" r="1.45"/></g></svg></div>
<div class="tr" style="top:416.80px"><span class="c1">Журнал контрольной тарировки динамометрических клю...</span><span class="c2">1</span><span class="c3">14.11.2023 12:17:00</span><span class="c5">Игнатьев Анатолий</span><svg class="kb" width="4" height="16" viewBox="0 0 4 16"><g fill="#0a1fb0"><circle cx="2" cy="1.7" r="1.45"/><circle cx="2" cy="7.5" r="1.45"/><circle cx="2" cy="13.4" r="1.45"/></g></svg></div>
<div class="tr" style="top:446.30px"><span class="c1">Общий журнал работ (1026/пр)</span><span class="c2">1</span><span class="c3">29.05.2024 10:26:00</span><span class="c5">Тменов Артур Константинович</span><svg class="kb" width="4" height="16" viewBox="0 0 4 16"><g fill="#0a1fb0"><circle cx="2" cy="1.7" r="1.45"/><circle cx="2" cy="7.5" r="1.45"/><circle cx="2" cy="13.4" r="1.45"/></g></svg></div>
<div class="tr" style="top:475.80px"><span class="c1">Журнал антикоррозионной защиты сварных соединений ...</span><span class="c2">1</span><span class="c3">17.06.2024 10:28:00</span><span class="c5">Игнатьев Анатолий</span><svg class="kb" width="4" height="16" viewBox="0 0 4 16"><g fill="#0a1fb0"><circle cx="2" cy="1.7" r="1.45"/><circle cx="2" cy="7.5" r="1.45"/><circle cx="2" cy="13.4" r="1.45"/></g></svg></div>
<div class="tr" style="top:505.30px"><span class="c1">Журнал Строительного контроля v.2</span><span class="c2">1</span><span class="c3">07.06.2024 10:54:00</span><span class="c5">Игнатьев Анатолий</span><svg class="kb" width="4" height="16" viewBox="0 0 4 16"><g fill="#0a1fb0"><circle cx="2" cy="1.7" r="1.45"/><circle cx="2" cy="7.5" r="1.45"/><circle cx="2" cy="13.4" r="1.45"/></g></svg></div>
<div class="tr" style="top:534.80px"><span class="c1">Журнал по монтажу строительных конструкций (СП 70.13...</span><span class="c2">1</span><span class="c3">17.06.2024 10:29:00</span><span class="c5">Игнатьев Анатолий</span><svg class="kb" width="4" height="16" viewBox="0 0 4 16"><g fill="#0a1fb0"><circle cx="2" cy="1.7" r="1.45"/><circle cx="2" cy="7.5" r="1.45"/><circle cx="2" cy="13.4" r="1.45"/></g></svg></div>
<div class="tr" style="top:564.30px"><span class="c1">Журнал Ухода за бетоном (Форма Ф-55)</span><span class="c2">1</span><span class="c3">17.06.2024 10:29:00</span><span class="c5">Игнатьев Анатолий</span><svg class="kb" width="4" height="16" viewBox="0 0 4 16"><g fill="#0a1fb0"><circle cx="2" cy="1.7" r="1.45"/><circle cx="2" cy="7.5" r="1.45"/><circle cx="2" cy="13.4" r="1.45"/></g></svg></div>
<div class="tr" style="top:593.80px"><span class="c1">Журнал прокладки кабелей (И 1.13-07 Форма 18)</span><span class="c2">1</span><span class="c3">17.06.2024 10:29:00</span><span class="c5">Игнатьев Анатолий</span><svg class="kb" width="4" height="16" viewBox="0 0 4 16"><g fill="#0a1fb0"><circle cx="2" cy="1.7" r="1.45"/><circle cx="2" cy="7.5" r="1.45"/><circle cx="2" cy="13.4" r="1.45"/></g></svg></div>
<div class="tr" style="top:623.30px"><span class="c1">Журнал технического нивелирования (Форма Ф-6)</span><span class="c2">1</span><span class="c3">17.06.2024 10:29:00</span><span class="c5">Игнатьев Анатолий</span><svg class="kb" width="4" height="16" viewBox="0 0 4 16"><g fill="#0a1fb0"><circle cx="2" cy="1.7" r="1.45"/><circle cx="2" cy="7.5" r="1.45"/><circle cx="2" cy="13.4" r="1.45"/></g></svg></div>
<div class="tr" style="top:652.80px"><span class="c1">Журнал регистрации вводного инструктажа (п.86 постан...</span><span class="c2">1</span><span class="c3">17.06.2024 10:30:00</span><span class="c5">Игнатьев Анатолий</span><svg class="kb" width="4" height="16" viewBox="0 0 4 16"><g fill="#0a1fb0"><circle cx="2" cy="1.7" r="1.45"/><circle cx="2" cy="7.5" r="1.45"/><circle cx="2" cy="13.4" r="1.45"/></g></svg></div>
<div class="abs" style="left:349px;top:682.6px;width:1029px;height:1px;background:#f0f1f3"></div>
<div class="abs" style="left:1377.5px;top:181.7px;width:9px;height:505.5px;background:#f8f8f8;border-left:1px solid #ececec;border-right:1px solid #ececec"></div>
<div class="abs" style="left:1380px;top:184px;width:5px;height:233px;background:#bdbdbd;border-radius:3px"></div>

<div class="ftr"></div>
<div class="ftxt">© Цифровое управление строительством | <b>Сообщить о проблеме</b></div>
</body></html>
